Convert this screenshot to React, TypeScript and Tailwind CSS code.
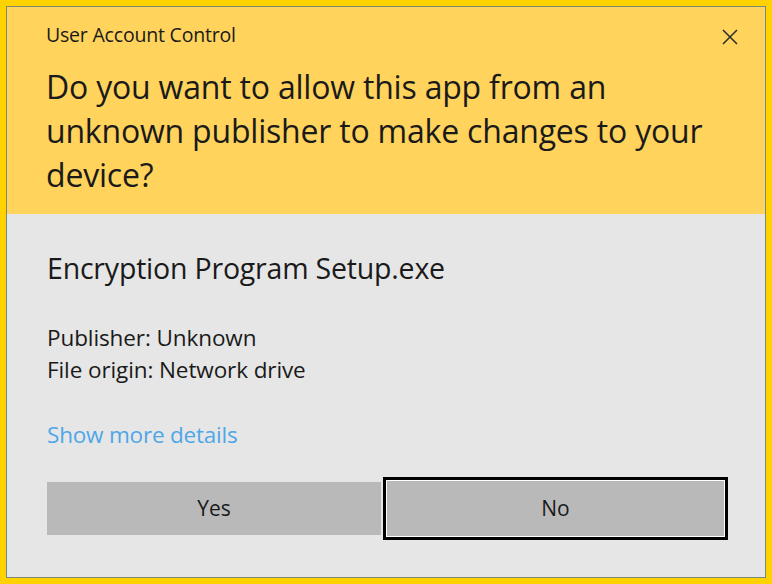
export default function App() {
  return (
    <div className="h-[584px] w-[772px] bg-[#ffd200] p-[6px] font-['Open_Sans',sans-serif]">
      <div className="flex h-full w-full flex-col border border-[#7d8a74] bg-[#e6e6e6]">
        {/* header */}
        <div className="h-[207px] bg-[#ffd35c] pl-[39px] pr-[26px] pt-[18px] text-[#1a1a1a]">
          <div className="flex items-start justify-between">
            <span className="text-[19.5px] leading-[20px] tracking-[-0.2px]">User Account Control</span>
            <svg className="mt-[3px] h-[18px] w-[18px]" viewBox="0 0 18 18" fill="none" stroke="#2a2a2a" strokeWidth="1.5">
              <path d="M2 2l14 14M16 2L2 16" />
            </svg>
          </div>
          <h1 className="mt-[19px] w-[675px] text-[32px] leading-[44px] tracking-[-0.2px]">
            Do you want to allow this app from an unknown publisher to make changes to your device?
          </h1>
        </div>

        {/* body */}
        <div className="flex flex-1 flex-col border-l-2 border-[#dbe8f2] pl-[38px] pr-[37px] text-[#1a1a1a]">
          <p className="mt-[38px] text-[28.5px] leading-[32px] tracking-[-0.2px]">Encryption Program Setup.exe</p>
          <div className="mt-[38px] text-[22.5px] leading-[32px] tracking-[-0.1px]">
            <p>Publisher: Unknown</p>
            <p>File origin: Network drive</p>
          </div>
          <a className="mt-[33px] text-[22.5px] leading-[32px] tracking-[-0.2px] text-[#4ea6e8]">Show more details</a>

          <div className="mt-[26px] flex items-center">
            <button className="h-[53px] w-[334px] bg-[#b9b9b9] text-[21px] text-[#1a1a1a]">Yes</button>
            <button className="ml-[2px] h-[63px] flex-1 border-[3px] border-black bg-[#b9b9b9] text-[21px] text-[#1a1a1a] ring-1 ring-inset ring-white">
              No
            </button>
          </div>
        </div>
      </div>
    </div>
  )
}
